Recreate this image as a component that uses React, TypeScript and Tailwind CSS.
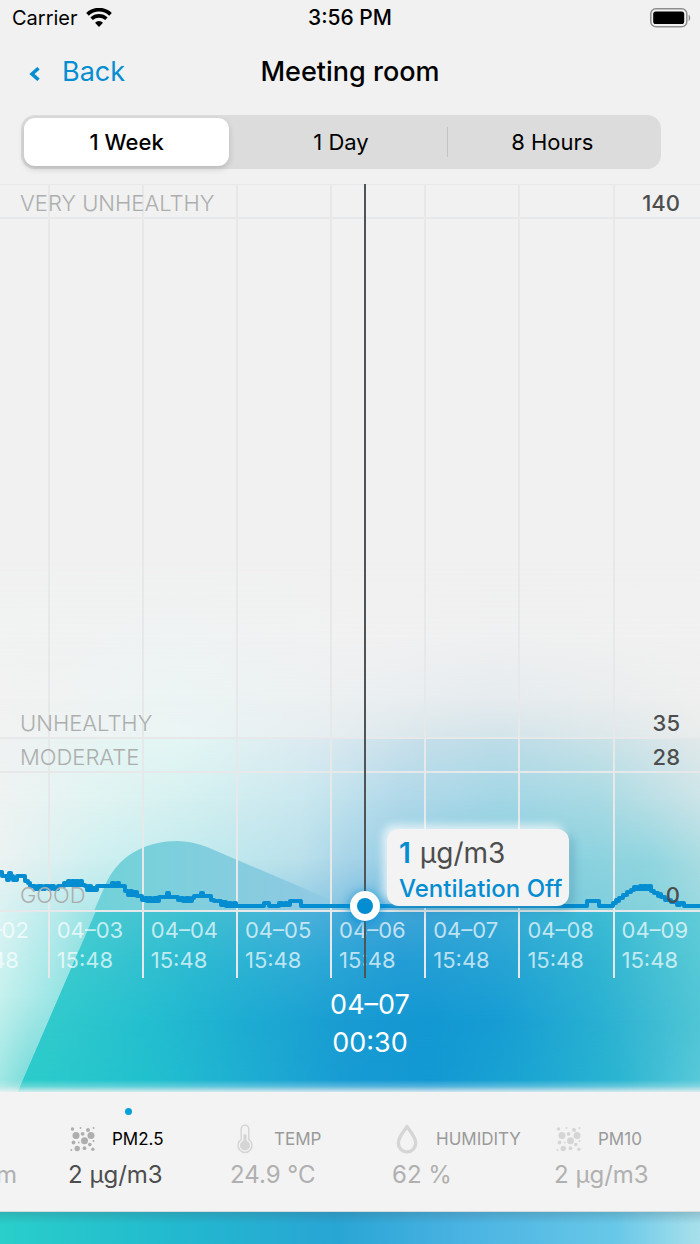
import { useState } from "react";

type Stop = [number, string];
type Row = { y: number; stops: Stop[] };

const HAZE: Row[] = [
  { y: 560, stops: [[0, "#f1f1f1"], [700, "#f1f1f1"]] },
  { y: 640, stops: [[0, "#f1f2f2"], [177, "#eff3f3"], [350, "#f1f1f2"], [500, "#eff0f1"], [700, "#f1f1f1"]] },
  { y: 700, stops: [[0, "#f1f2f1"], [177, "#ecf4f4"], [330, "#ecf0f1"], [490, "#e5ebee"], [600, "#e9edee"], [700, "#efefef"]] },
  { y: 738, stops: [[0, "#f1f2f2"], [177, "#eaf5f4"], [330, "#e5edf0"], [425, "#d8e6eb"], [500, "#d2e4ea"], [600, "#dbe7ea"], [700, "#e9ecec"]] },
];

const UPPER: Row[] = [
  { y: 738, stops: [[0, "#f0f2f2"], [100, "#e6f5f3"], [177, "#e4f7f5"], [330, "#dbe9f0"], [425, "#c6dfea"], [500, "#bddde8"], [600, "#cae2e8"], [700, "#e2e9ea"]] },
  { y: 800, stops: [[0, "#eef3f2"], [100, "#dff4f2"], [200, "#d3eff0"], [300, "#cae8ef"], [400, "#b0d8e9"], [500, "#a2d6e5"], [600, "#a8dae3"], [700, "#cbe4e8"]] },
  { y: 860, stops: [[0, "#ebf2f2"], [100, "#cdeff0"], [200, "#c0eaee"], [300, "#bae0eb"], [350, "#a6d3e8"], [450, "#87cbe0"], [550, "#88d0df"], [650, "#90d5df"], [700, "#a8dce2"]] },
  { y: 910, stops: [[0, "#d9f1f2"], [80, "#b5e8ea"], [200, "#a8e0ea"], [330, "#8ac7e2"], [365, "#78bde0"], [450, "#78c0dd"], [550, "#7ccadd"], [650, "#84d2dc"], [700, "#98d8df"]] },
];

const LOWER: Row[] = [
  { y: 911, stops: [[0, "#ddf4f4"], [60, "#b5eaeb"], [120, "#80dce0"]] },
  { y: 1000, stops: [[0, "#c4f0ed"], [40, "#a5e8e7"], [80, "#85dede"]] },
  { y: 1085, stops: [[0, "#9ce6e3"], [30, "#74dad9"]] },
];

const BLOB: Row[] = [
  { y: 911, stops: [[90, "#4bcbd2"], [200, "#40bfd1"], [300, "#4ab2da"], [365, "#46a6d9"], [430, "#3ca5d7"], [500, "#38abd6"], [600, "#3dbbd4"], [700, "#62ccd8"]] },
  { y: 960, stops: [[70, "#3bcbcf"], [200, "#2cb9d1"], [300, "#2fabd6"], [400, "#249dd5"], [500, "#26a3d4"], [600, "#31b5d2"], [700, "#57c9d6"]] },
  { y: 1020, stops: [[50, "#31cacc"], [150, "#24bed0"], [250, "#1dabd2"], [350, "#199bd2"], [430, "#1398d3"], [500, "#179dd3"], [600, "#29b0d2"], [700, "#50c5d5"]] },
  { y: 1085, stops: [[20, "#2cccca"], [150, "#21c0ce"], [250, "#1eadd2"], [350, "#179bd3"], [430, "#1298d3"], [530, "#1ba6d2"], [620, "#2bb5d1"], [700, "#58c9d9"]] },
];

function Mesh({ id, rows, bottom }: { id: string; rows: Row[]; bottom: number }) {
  return (
    <g>
      {rows.map((row, i) => {
        const top = i === 0 ? row.y : rows[i - 1].y;
        return (
          <g key={row.y}>
            <linearGradient id={`${id}-c${i}`} gradientUnits="userSpaceOnUse" x1="0" x2="700" y1="0" y2="0">
              {row.stops.map(([x, color]) => (
                <stop key={x} offset={x / 700} stopColor={color} />
              ))}
            </linearGradient>
            <linearGradient id={`${id}-f${i}`} gradientUnits="userSpaceOnUse" x1="0" x2="0" y1={top} y2={row.y}>
              <stop offset="0" stopColor="#fff" stopOpacity={i === 0 ? 1 : 0} />
              <stop offset="1" stopColor="#fff" />
            </linearGradient>
            <mask id={`${id}-m${i}`} maskUnits="userSpaceOnUse" x="0" y={top} width="700" height={bottom - top}>
              <rect x="0" y={top} width="700" height={bottom - top} fill={`url(#${id}-f${i})`} />
            </mask>
            <rect x="0" y={top} width="700" height={bottom - top} fill={`url(#${id}-c${i})`} mask={`url(#${id}-m${i})`} />
          </g>
        );
      })}
    </g>
  );
}

function Backdrop() {
  return (
    <svg className="absolute inset-0 h-full w-full" viewBox="0 0 700 1244" preserveAspectRatio="none" aria-hidden="true">
      <defs>
        <linearGradient id="hill" gradientUnits="userSpaceOnUse" x1="95" x2="345" y1="0" y2="0">
          <stop offset="0" stopColor="#70d2d8" />
          <stop offset="0.45" stopColor="#82cede" />
          <stop offset="0.8" stopColor="#8ccae1" />
          <stop offset="1" stopColor="#84c4e1" stopOpacity="0" />
        </linearGradient>
        <linearGradient id="edge" x1="0" x2="0" y1="0" y2="1">
          <stop offset="0" stopColor="#f3f3f3" stopOpacity="0" />
          <stop offset="0.5" stopColor="#f3f3f3" stopOpacity="0.3" />
          <stop offset="1" stopColor="#f3f3f3" stopOpacity="0.95" />
        </linearGradient>
        <clipPath id="slope">
          <path d="M96 911 L18 1092 H700 V911 Z" />
        </clipPath>
      </defs>
      <Mesh id="haze" rows={HAZE} bottom={739} />
      <Mesh id="up" rows={UPPER} bottom={911} />
      <path d="M94 911 L107 881 C122 852 150 841 177 841 Q192 841 207 847 L338 903 L345 911 Z" fill="url(#hill)" />
      <Mesh id="low" rows={LOWER} bottom={1092} />
      <g clipPath="url(#slope)">
        <Mesh id="blob" rows={BLOB} bottom={1092} />
      </g>
      <rect x="0" y="1080" width="700" height="13" fill="url(#edge)" />
    </svg>
  );
}

const SERIES =
  "M0 872 H2 V876 H7 V880 H9 V873 H11 V876 H13 V880 H17 V876 H25 V881 H28 V883 H30 V886 H35 V889 H38 V886 H42 V889 H45 V886 H49 V889 H51 V886 H54 V889 H58 V886 H64 V883 H66 V885 H68 V881 H70 V885 H72 V881 H74 V885 H76 V881 H78 V885 H80 V881 H82 V885 H85 V886 H87 V890 H89 V886 H91 V890 H93 V888 H95 V890 H97 V886 H112 V883 H114 V886 H117 V883 H119 V886 H125 V891 H128 V895 H130 V891 H132 V895 H134 V892 H137 V896 H142 V900 H145 V898 H147 V901 H149 V898 H151 V901 H154 V898 H157 V901 H159 V897 H167 V893 H169 V897 H178 V900 H181 V898 H183 V901 H186 V898 H189 V901 H192 V898 H194 V896 H201 V893 H203 V896 H211 V900 H214 V901 H221 V905 H223 V902 H226 V906 H229 V903 H231 V906 H234 V903 H236 V906 H264 V903 H269 V906 H279 V903 H282 V905 H285 V903 H287 V905 H290 V901 H301 V906 H587 V901 H599 V906 H613 V903 H616 V900 H619 V901 V898 H623 V895 H627 V892 H631 V890 H634 V887 H637 V889 H640 V886 H642 V889 H644 V886 H647 V889 H649 V886 H651 V891 H654 V893 H658 V896 H661 V894 V897 H665 V900 H671 V902 H677 V905 H680 V903 H684 V906 H700";

const DAYS = ["04–02", "04–03", "04–04", "04–05", "04–06", "04–07", "04–08", "04–09"];
const COLUMN_X = [49, 143, 237, 331, 425, 519, 614];
const ROW_Y = [218, 738, 772, 911];

const BANDS = [
  { label: "VERY UNHEALTHY", value: "140", height: "h-[34px]" },
  { label: "UNHEALTHY", value: "35", height: "h-[520px]" },
  { label: "MODERATE", value: "28", height: "h-[34px]" },
  { label: "GOOD", value: "0", height: "h-[138px]" },
];

function Plot() {
  return (
    <svg className="absolute inset-0 h-full w-full" viewBox="0 184 700 794" preserveAspectRatio="none" aria-hidden="true">
      <g stroke="#e6e8e9" strokeWidth="2">
        <path d="M0 184.500H700" strokeWidth="1" />
        {COLUMN_X.map((x) => (
          <path key={x} d={`M${x} 184V978`} />
        ))}
        {ROW_Y.map((y) => (
          <path key={y} d={`M0 ${y}H700`} />
        ))}
      </g>
      <path d={SERIES} fill="none" stroke="#058dd2" strokeWidth="4" strokeLinejoin="round" />
    </svg>
  );
}

function WifiIcon() {
  return (
    <svg className="h-[20px] w-[26px]" viewBox="0 0 26 20" aria-hidden="true">
      <path d="M1.500 6.300a16.600 16.600 0 0 1 23 0" fill="none" stroke="#000" strokeWidth="3.800" />
      <path d="M5.600 10.800a10.700 10.700 0 0 1 14.800 0" fill="none" stroke="#000" strokeWidth="3.600" />
      <path d="M9 14.700a5.800 5.800 0 0 1 8 0L13 19Z" />
    </svg>
  );
}

function BatteryIcon() {
  return (
    <svg className="h-[20px] w-[42px]" viewBox="0 0 42 20" aria-hidden="true">
      <rect x="0.800" y="0.800" width="36" height="18" rx="5" fill="none" stroke="#8f8f8f" strokeWidth="1.500" />
      <rect x="3.200" y="3.400" width="31" height="12.600" rx="2.600" />
      <path d="M38.700 6.800c2 .8 2 5.400 0 6.200Z" fill="#8a8a8a" />
    </svg>
  );
}

const PARTICLES: [number, number, number][] = [
  [2.5, 3, 1.7], [10.5, 2, 0.9], [18, 4, 2], [23.5, 2, 1],
  [6, 9.5, 3.5], [12.6, 7.8, 1.9], [21, 9.5, 3.5],
  [3.5, 16.5, 1.9], [8.7, 16.5, 0.9], [14.5, 14.7, 3.5], [23.5, 15, 1],
  [19.8, 18.6, 1.8], [1.4, 24, 1], [7.2, 22.5, 2.7], [14.5, 22.2, 1.9], [22.9, 23.3, 1.7],
];

function ParticlesIcon() {
  return (
    <svg className="size-[26px]" viewBox="0 0 26 26" fill="currentColor" aria-hidden="true">
      {PARTICLES.map(([x, y, r]) => (
        <circle key={`${x}-${y}`} cx={x} cy={y} r={r} />
      ))}
    </svg>
  );
}

function ThermometerIcon() {
  return (
    <svg className="h-[30px] w-[18px]" viewBox="0 0 18 30" aria-hidden="true">
      <path d="M5.200 15.500V5a3.800 3.800 0 0 1 7.600 0v10.500a7 7 0 1 1-7.600 0Z" fill="none" stroke="currentColor" strokeWidth="1.500" />
      <circle cx="9" cy="21.500" r="5" fill="currentColor" />
      <path d="M9 11.500v9" stroke="currentColor" strokeWidth="3.200" strokeLinecap="round" />
    </svg>
  );
}

function DropIcon() {
  return (
    <svg className="h-[30px] w-[22px]" viewBox="0 0 22 30" aria-hidden="true">
      <path d="M11 2.500C8.500 7 2.300 12.500 2.300 19.200a8.700 8.700 0 0 0 17.400 0C19.700 12.500 13.500 7 11 2.500Z" fill="none" stroke="currentColor" strokeWidth="3.400" strokeLinejoin="round" />
    </svg>
  );
}

const METRICS = [
  { label: "PM2.5", value: "2 µg/m3", Icon: ParticlesIcon },
  { label: "TEMP", value: "24.9 °C", Icon: ThermometerIcon },
  { label: "HUMIDITY", value: "62 %", Icon: DropIcon },
  { label: "PM10", value: "2 µg/m3", Icon: ParticlesIcon },
];

const RANGES = ["1 Week", "1 Day", "8 Hours"];

export default function App() {
  const [range, setRange] = useState(0);
  const [metric, setMetric] = useState(0);

  return (
    <div className="relative flex flex-col overflow-hidden bg-[#f1f1f1] font-['Inter','Liberation_Sans',sans-serif] text-black">
      <Backdrop />

      <div className="relative grid h-9 grid-cols-[1fr_auto_1fr] items-center pr-2 pl-2 text-[20px]">
        <div className="flex items-center gap-2 pl-1">
          <span>Carrier</span>
          <WifiIcon />
        </div>
        <span className="text-center text-[21px] font-medium">3:56 PM</span>
        <span className="flex justify-end">
          <BatteryIcon />
        </span>
      </div>

      <header className="relative grid h-[72px] grid-cols-[1fr_auto_1fr] items-center pr-7 pl-7">
        <a href="#rooms" className="flex items-center gap-5 text-[27px] text-[#058dd2]">
          <svg className="mt-1 h-[14px] w-[14px]" viewBox="0 0 14 14" fill="none" stroke="currentColor" strokeWidth="3.500" aria-hidden="true">
            <path d="M10.500 1.200 4 7l6.500 5.800" />
          </svg>
          Back
        </a>
        <h1 className="text-[27px] font-medium">Meeting room</h1>
      </header>

      <div className="relative mt-[7px] mr-[39px] ml-[21px] grid h-[54px] grid-cols-3 rounded-[14px] bg-[#dcdcdc] p-[3px] text-[22px]">
        {RANGES.map((name, i) => (
          <button
            key={name}
            type="button"
            aria-pressed={range === i}
            onClick={() => setRange(i)}
            className={
              range === i
                ? "mr-[6px] rounded-[11px] bg-white font-medium shadow-[0_3px_6px_rgba(0,0,0,0.16)]"
                : "relative"
            }
          >
            {name}
            {i === 2 && range === 0 && <span className="absolute top-[9px] left-0 h-[30px] w-px bg-[#c4c4c4]" />}
          </button>
        ))}
      </div>

      <main>
        <section className="relative mt-[15px]">
          <Plot />
          {BANDS.map((band) => (
            <div key={band.label} className={`${band.height} relative flex items-end justify-between px-5 text-[22px] leading-[30px]`}>
              <span className="font-light text-[#acaeae]">{band.label}</span>
              <span className="font-medium text-[#4d4d4d]">{band.value}</span>
            </div>
          ))}
          <div className="relative -ml-[6.5%] grid h-[68px] w-[107.6%] grid-cols-8 pt-[5px] text-[22px] leading-[30px] text-white/70">
            {DAYS.map((day) => (
              <div key={day} className="pl-2 whitespace-nowrap">
                <div>{day}</div>
                <div>15:48</div>
              </div>
            ))}
          </div>

          <div className="absolute inset-y-0 left-[52%] w-[2px] bg-[#505457]">
            <div className="absolute bottom-[57px] -left-[14px] flex size-[30px] items-center justify-center rounded-full bg-white shadow-[0_2px_10px_2px_rgba(5,141,210,0.6)]">
              <div className="size-4 rounded-full bg-[#058dd2]" />
            </div>
            <div className="absolute bottom-[72px] left-[23px] h-[77px] w-[182px] rounded-[12px] bg-[#f3f3f3] px-3 pt-[6px] whitespace-nowrap shadow-[-4px_-4px_8px_rgba(255,255,255,0.75),4px_4px_10px_rgba(0,80,120,0.25)]">
              <p className="flex gap-[9px] text-[28px] leading-[36px] text-[#4d4d4d]">
                <strong className="font-semibold text-[#058dd2]">1</strong>
                <span>µg/m3</span>
              </p>
              <p className="text-[24px] leading-[36px] font-medium text-[#058dd2]">Ventilation Off</p>
            </div>
          </div>
        </section>

        <div className="relative flex flex-col pt-[8px] pb-[30px] pl-10 text-center text-[27px] leading-[38px] text-white">
          <span>04–07</span>
          <span>00:30</span>
        </div>
      </main>

      <nav className="relative flex h-[120px] overflow-hidden border-b border-[#d9dcdc] bg-[#f3f3f3]">
        <div className="flex w-[17px] shrink-0 justify-end pt-[66px] text-[24px] leading-[34px] text-[#b0b0b0]">ppm</div>
        <div className="ml-[51px] flex">
          {METRICS.map(({ label, value, Icon }, i) => (
            <button
              key={label}
              type="button"
              aria-pressed={metric === i}
              onClick={() => setMetric(i)}
              className="flex w-[162px] shrink-0 flex-col items-start pt-4 text-left"
            >
              <span className="flex h-2 w-[120px] justify-center">
                {metric === i && <span className="size-[7px] rounded-full bg-[#05a0dc]" />}
              </span>
              <span className="mt-2 flex h-[30px] items-center gap-[14px]">
                <span className={metric === i ? "flex w-[30px] justify-center text-[#aeaeae]" : "flex w-[30px] justify-center text-[#d5d5d5]"}>
                  <Icon />
                </span>
                <span className={metric === i ? "pt-[2px] text-[17px] text-black" : "pt-[2px] text-[17px] text-[#9a9a9a]"}>{label}</span>
              </span>
              <span className={metric === i ? "mt-1 text-[24px] leading-[34px] text-[#4d4d4d]" : "mt-1 text-[24px] leading-[34px] text-[#b0b0b0]"}>
                {value}
              </span>
            </button>
          ))}
        </div>
      </nav>

      <div className="relative h-8 bg-[linear-gradient(to_right,#29cfca_0%,#22b9cf_25%,#28a5d4_48%,#48b2e2_65%,#68c8e8_88%,#a8e0ec_100%)]">
        <div className="h-3 bg-linear-to-b from-[#456070]/25 to-transparent" />
      </div>
    </div>
  );
}
